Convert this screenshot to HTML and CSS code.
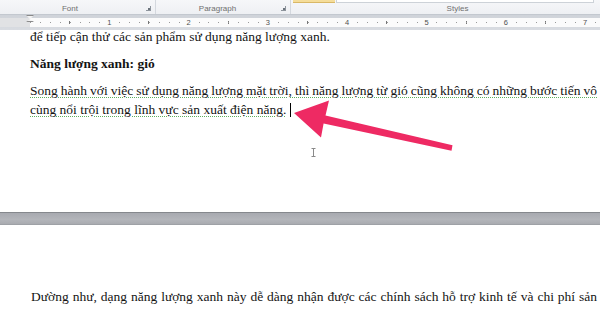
FILE: index.html
```html
<!DOCTYPE html>
<html lang="vi">
<head>
<meta charset="utf-8">
<title>Word</title>
<link rel="stylesheet" href="styles.css">
</head>
<body>
<div class="screen">
  <div class="ribbon">
    <div class="group g-font">
      <span class="label">Font</span>
      <span class="launcher"></span>
    </div>
    <div class="group g-para">
      <span class="label">Paragraph</span>
      <span class="launcher"></span>
    </div>
    <div class="group g-styles">
      <div class="gallery"><span class="g-yellow"></span><span class="g-white"></span></div>
      <span class="label">Styles</span>
    </div>
  </div>
  <div class="ruler-area">
    <div class="ruler">
      <div class="ruler-margin"></div>
      <div class="ruler-body">
        <span class="inch"><i>1</i></span><span class="inch"><i>2</i></span><span class="inch"><i>3</i></span><span class="inch"><i>4</i></span><span class="inch"><i>5</i></span><span class="inch"><i>6</i></span><span class="inch"><i>7</i></span>
      </div>
      <span class="indent"></span>
    </div>
  </div>
  <div class="page">
    <p class="cut">để tiếp cận thử các sản phẩm sử dụng năng lượng xanh.</p>
    <p class="bold">Năng lượng xanh: gió</p>
    <p class="grammar"><span class="full">Song hành với việc sử dụng năng lượng mặt trời, thì năng lượng từ gió cũng không có những bước tiến vô</span><span class="ln"><span class="ul">cùng nổi trội trong lĩnh vực sản xuất điện năng.</span> <span class="caret"></span></span></p>
  </div>
  <div class="gap"></div>
  <div class="page2">
    <p class="full">Dường như, dạng năng lượng xanh này dễ dàng nhận được các chính sách hỗ trợ kinh tế và chi phí sản</p>
  </div>
  <svg class="overlay" width="600" height="312" viewBox="0 0 600 312">
    <polygon fill="#ee2a63" points="294,113 329,100.5 325.5,115.6 452.5,145.3 451.5,150.7 323.6,123.6 321,137.5"/>
    <g stroke="#8a8a8a" stroke-width="1" fill="none">
      <path d="M313.5 148.5v8M311.5 148.5h4M311.5 156.5h4"/>
    </g>
  </svg>
</div>
</body>
</html>
```
FILE: styles.css
```css
* { box-sizing: border-box; }
html, body { margin: 0; padding: 0; background: #ffffff; }
.screen {
  position: relative;
  width: 600px;
  height: 312px;
  overflow: hidden;
  display: flex;
  flex-direction: column;
  font-family: "Liberation Serif", "Times New Roman", serif;
  color: #141414;
}
.ribbon {
  display: flex;
  height: 15px;
  flex: none;
  background: linear-gradient(#f6f7f9, #eef0f3);
  border-bottom: 1px solid #c3c8cf;
}
.group {
  display: flex;
  align-items: flex-end;
  border-right: 1px solid #d4d8de;
  position: relative;
}
.g-font { width: 156px; }
.g-para { width: 135px; }
.g-styles { flex: 1; flex-direction: column; align-items: stretch; border-right: none; }
.label {
  flex: 1;
  text-align: center;
  font-family: "Liberation Sans", Arial, sans-serif;
  font-size: 8px;
  line-height: 10px;
  color: #6f6f6f;
  padding-right: 6px;
}
.g-para .label { padding-right: 2px; }
.g-styles .label { flex: none; margin-top: auto; padding-left: 24px; padding-right: 0; }
.launcher {
  width: 5px;
  height: 5px;
  margin: 0 4px 3px 0;
  border-right: 1px solid #8d949c;
  border-bottom: 1px solid #8d949c;
  position: relative;
}
.launcher::after {
  content: "";
  position: absolute;
  right: 0; bottom: 0;
  width: 2px; height: 2px;
  background: #6c747d;
}
.gallery { display: flex; height: 3px; padding-left: 2px; }
.g-yellow { width: 42px; background: #f5dd9a; border-bottom: 1px solid #d9b867; }
.g-white { width: 258px; margin-left: 1px; background: #ffffff; border: 1px solid #cdd2d8; border-top: none; }

.ruler-area {
  height: 15px;
  flex: none;
  background: linear-gradient(#cfd3d9, #d9dce1);
  padding-top: 3px;
}
.ruler {
  position: relative;
  display: flex;
  height: 9px;
}
.ruler-margin { width: 30px; background: #e1e2e4; }
.ruler-body {
  flex: 1;
  display: flex;
  background:
    repeating-linear-gradient(90deg, #9a9a9a 0 1px, transparent 1px 9.9125px) 0 50% / 100% 1px no-repeat,
    repeating-linear-gradient(90deg, transparent 0 39.15px, #777 39.15px 40.15px, transparent 40.15px 79.3px) 0 50% / 100% 3px no-repeat,
    #fbfbfb;
}
.inch {
  width: 79.3px;
  flex: none;
  display: flex;
  justify-content: flex-end;
}
.inch i {
  font-style: normal;
  font-family: "Liberation Sans", Arial, sans-serif;
  font-size: 7.5px;
  line-height: 9px;
  color: #505050;
  background: #fbfbfb;
  padding: 0 1px;
  transform: translateX(50%);
}
.indent {
  position: absolute;
  left: 26px;
  top: -3px;
  width: 8px;
  height: 7px;
  background: #f3f3f3;
  border: 1px solid #8a8a8a;
  clip-path: polygon(0 0, 100% 0, 50% 60%, 100% 100%, 0 100%, 50% 60%);
}

p { margin: 0; }
.page {
  height: 182px;
  flex: none;
  background: #ffffff;
  padding: 0 3px 0 30px;
  font-size: 13.5px;
  line-height: 19px;
  overflow: hidden;
}
.page p { margin-bottom: 8px; }
.page .cut { margin-top: -3px; }
.bold { font-weight: bold; }
.full {
  display: block;
  text-align: justify;
  text-align-last: justify;
  word-spacing: -1.5px;
  white-space: normal;
}
.ln { display: block; }
.grammar .full, .grammar .ul {
  text-decoration: underline dotted #5fae5f;
  text-underline-offset: 2px;
  text-decoration-thickness: 1px;
}
.caret {
  display: inline-block;
  width: 1px;
  height: 14px;
  background: #000;
  vertical-align: -3px;
}
.gap {
  height: 13px;
  flex: none;
  background: linear-gradient(#a8aab0, #b3b5ba 60%, #a9abb0);
  border-top: 1px solid #85888d;
  border-bottom: 1px solid #9ea1a6;
}
.page2 {
  flex: 1;
  background: #ffffff;
  padding: 62px 3px 0 31px;
  font-size: 13.5px;
  line-height: 19px;
}
.overlay {
  position: absolute;
  left: 0;
  top: 0;
  pointer-events: none;
}
```
